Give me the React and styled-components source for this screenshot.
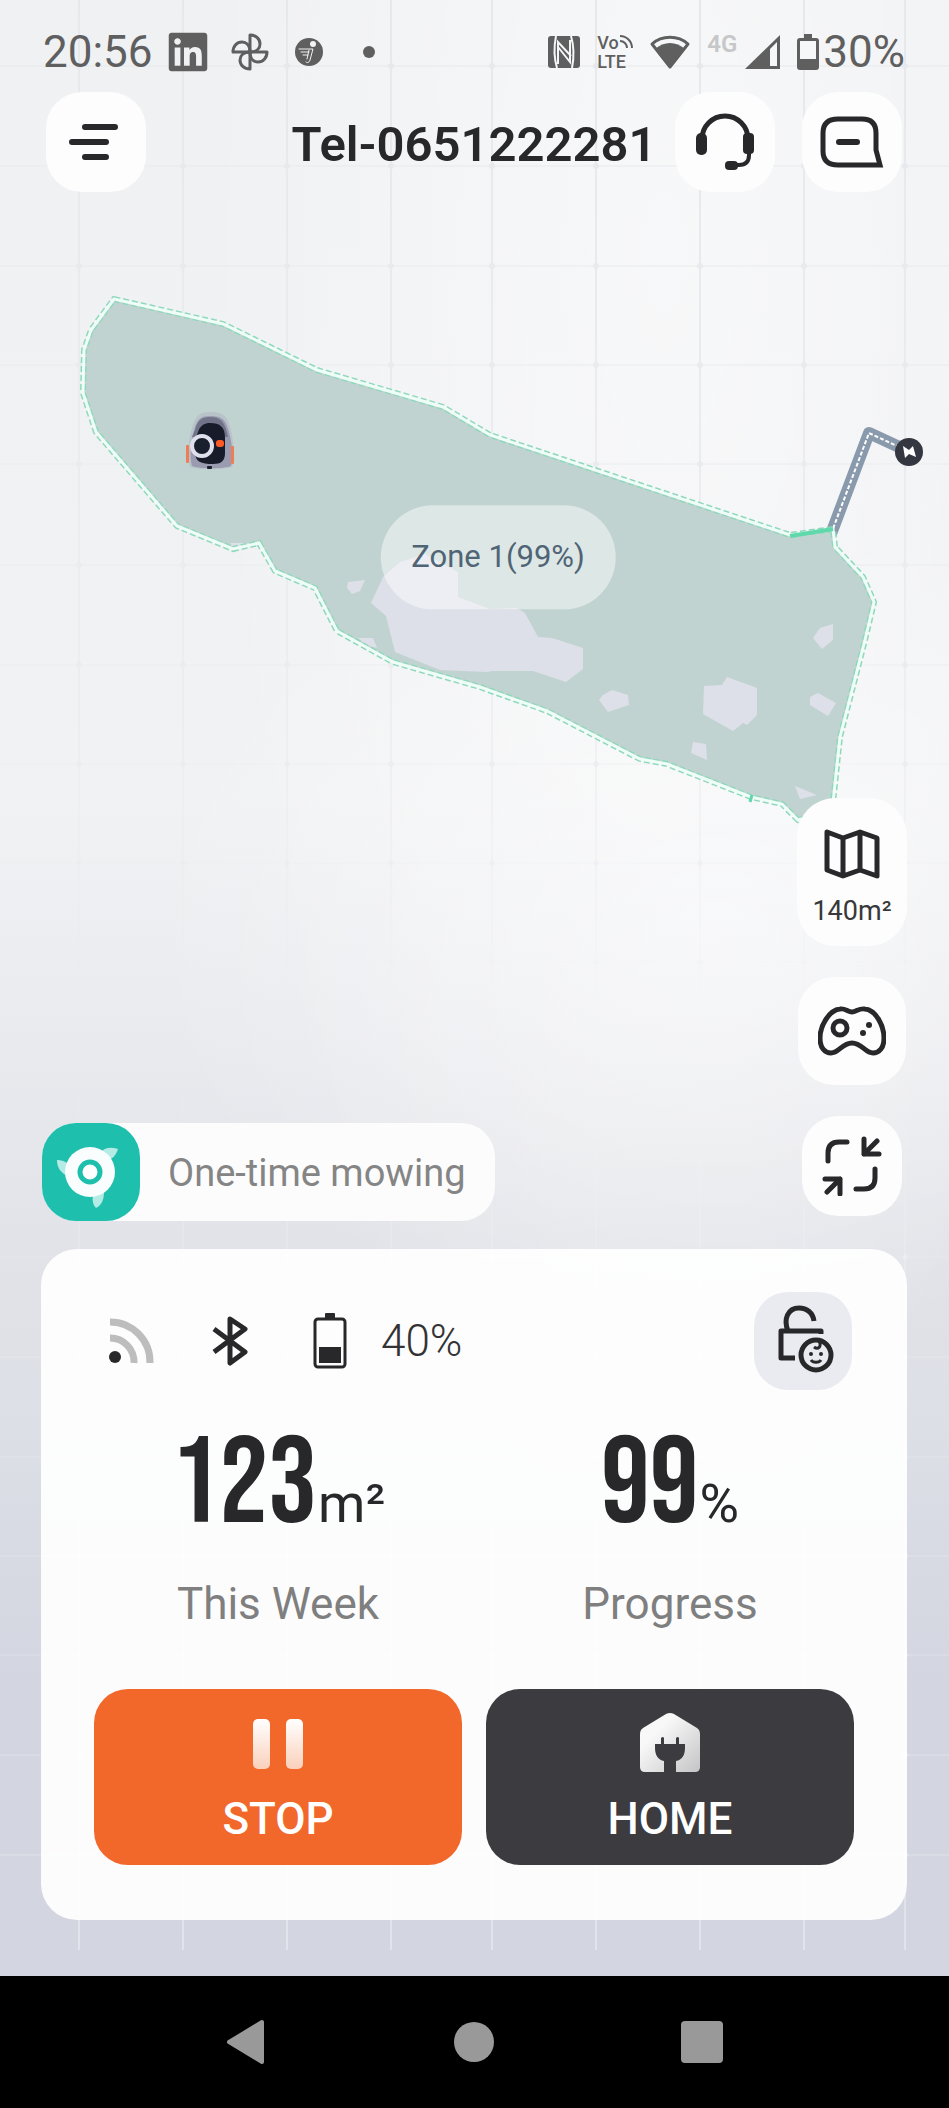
import React, { useState } from "react";
import styled, { createGlobalStyle } from "styled-components";
import { FaLinkedin } from "react-icons/fa";

const COLUMNS = [79, 183, 287, 391, 492, 596, 700, 804, 905];
const ROWS = [66, 166, 266, 365, 464, 565, 665, 764, 863, 962, 1061, 1160, 1257, 1357, 1457, 1556, 1655, 1755, 1855];

const LAWN =
    "114,299 223,324 317,370 443,407 490,435 790,535 833,529 835,547 863,577 874,602 865,640 840,737 832,812 798,820 782,804 751,797 667,764 640,759 547,711 480,687 393,662 337,631 315,588 275,571 259,543 233,549 177,526 96,432 83,393 84,350 91,330";

const UNMOWED = [
    "383,577 400,562 425,554 458,572 458,597 490,609 517,608 525,613 538,637 552,638 583,648 583,669 566,682 533,671 492,671 487,672 440,670 395,652 386,616 371,603",
    "348,582 365,580 360,591 352,594 347,588",
    "358,638 373,638 377,648 366,645",
    "230,543 254,543 234,549",
    "599,700 603,695 612,690 628,695 629,705 608,712",
    "704,686 722,685 727,677 757,688 757,715 747,725 743,723 733,731 703,714",
    "813,638 820,628 833,624 833,640 822,649",
    "810,697 818,693 836,703 828,716 810,705",
    "693,742 706,744 707,760 691,753",
    "795,786 817,795 800,799",
];

const Backdrop = () => (
    <BackdropSvg aria-hidden="true">
        <defs>
            <linearGradient id="gridFade" gradientUnits="userSpaceOnUse" x1="0" y1="0" x2="0" y2="1950">
                <stop offset="0" stopColor="#e6e8eb" />
                <stop offset="0.3" stopColor="#eaecef" stopOpacity="0.9" />
                <stop offset="0.52" stopColor="#e6e8ec" stopOpacity="0" />
                <stop offset="0.65" stopColor="#ffffff" stopOpacity="0.15" />
                <stop offset="1" stopColor="#ffffff" stopOpacity="0.35" />
            </linearGradient>
        </defs>
        <g stroke="url(#gridFade)" strokeWidth="2">
            {COLUMNS.map((x) => (
                <line key={x} x1={x} y1="0" x2={x} y2="1950" />
            ))}
        </g>
        <g stroke="url(#gridFade)" strokeWidth="1">
            {ROWS.map((y) => (
                <line key={y} x1="0" y1={y} x2="100%" y2={y} />
            ))}
        </g>
        <g fill="url(#gridFade)">
            {ROWS.map((y) => COLUMNS.map((x) => <circle key={`${x}-${y}`} cx={x} cy={y} r="3" />))}
        </g>
    </BackdropSvg>
);

const LawnMap = () => (
    <MapSvg viewBox="0 192 949 660" role="img" aria-label="Lawn map">
        <polyline points="831,534 869,433 910,452" fill="none" stroke="#8a9aad" strokeWidth="12" strokeLinejoin="round" />
        <polyline points="831,534 869,433 910,452" fill="none" stroke="#ffffff" strokeWidth="2" strokeDasharray="4 2" />
        <polygon points={LAWN} fill="#c1d3d0" />
        <g fill="#dee0e9">
            {UNMOWED.map((points) => (
                <polygon key={points} points={points} />
            ))}
        </g>
        <polygon points={LAWN} fill="none" stroke="#8fd8bd" strokeWidth="6" strokeDasharray="6 3" />
        <polygon points={LAWN} fill="none" stroke="#effdf7" strokeWidth="3" />
        <line x1="790" y1="536" x2="833" y2="529" stroke="#5fd8ab" strokeWidth="4" />
        <line x1="752" y1="795" x2="750" y2="802" stroke="#5fd8ab" strokeWidth="3" />
        <circle cx="909" cy="452" r="14" fill="#34373f" />
        <path d="M903 446l6 4 4-4 3 11-7-3-4 4z" fill="#ffffff" />
        <g>
            <path d="M190 467c-3-9-2-30 4-45 3-7 7-10 16-10s15 2 18 9c6 15 7 37 4 46-8 3-34 3-42 0z" fill="#a9aabd" opacity="0.4" />
            <path d="M192 466c-3-9-1-26 3-39 3-8 6-11 15-11s14 2 17 10c5 14 7 32 4 40-8 3-31 3-39 0z" fill="#9a9bb0" />
            <path d="M195 430c2-9 6-13 15-13s13 3 16 12l2 8h-36z" fill="#717388" />
            <path d="M195 452c1-20 4-29 15-29 10 0 15 4 15 15v15c0 8-4 11-12 11-12 0-18-2-18-12z" fill="#181b29" />
            <rect x="186" y="445" width="3" height="18" rx="1" fill="#f07c55" />
            <rect x="231" y="446" width="3" height="18" rx="1" fill="#f07c55" />
            <circle cx="202" cy="446" r="10" fill="#1a1f2d" stroke="#dfe0ec" strokeWidth="4" />
            <rect x="216" y="440" width="8" height="7" rx="3" fill="#ff5a26" />
            <rect x="207" y="466" width="5" height="3" rx="1" fill="#1c1f2b" />
        </g>
    </MapSvg>
);

const PinwheelIcon = () => (
    <svg width="38" height="38" viewBox="0 0 38 38" fill="none" stroke="#5f5f5f" strokeWidth="3" strokeLinejoin="round">
        <path d="M19 19V2c6 0 10 4 10 9 0 4-3 8-10 8z" />
        <path d="M19 19h17c0 6-4 10-9 10-4 0-8-3-8-10z" />
        <path d="M19 19v17c-6 0-10-4-10-9 0-4 3-8 10-8z" />
        <path d="M19 19H2c0-6 4-10 9-10 4 0 8 3 8 10z" />
    </svg>
);

const MowerBadgeIcon = () => (
    <svg width="38" height="38" viewBox="0 0 38 38" fill="none">
        <circle cx="19" cy="19" r="14" fill="#5f5f5f" />
        <circle cx="23" cy="11" r="3" fill="#f2f3f5" />
        <path d="M9 16h14l-3 11c-1 3-3 3-4 2M11 19h8M13 22h5M19 17l-2 9" stroke="#f2f3f5" strokeWidth="1" strokeLinecap="round" />
    </svg>
);

const NfcIcon = () => (
    <svg width="34" height="34" viewBox="0 0 34 34" fill="none">
        <rect x="1" y="1" width="32" height="32" rx="3" fill="#5f5f5f" />
        <path d="M9 1c-2 10-2 22 1 32M24 1c3 10 3 22 1 32" stroke="#f5f6f8" strokeWidth="2" />
        <path d="M11 29V7l13 14M23 5v22L11 12" stroke="#f5f6f8" strokeWidth="2" />
    </svg>
);

const WifiIcon = () => (
    <svg width="42" height="36" viewBox="0 0 42 36" fill="none">
        <path d="M21 33L3 10C13 1 29 1 39 10z" stroke="#5f5f5f" strokeWidth="3" strokeLinejoin="round" />
        <path d="M21 34L6 15c9-8 21-8 30 0z" fill="#5f5f5f" />
    </svg>
);

const SignalIcon = () => (
    <svg width="36" height="34" viewBox="0 0 36 34">
        <path d="M0 34L35 0v34z" fill="#5f5f5f" />
        <path d="M25 14l7-7v24h-7z" fill="#f6f7f9" />
    </svg>
);

const PhoneBatteryIcon = () => (
    <svg width="22" height="36" viewBox="0 0 22 36">
        <path d="M7 0h8v4h4q3 0 3 3v26q0 3-3 3H3q-3 0-3-3V7q0-3 3-3h4z" fill="#5f5f5f" />
        <rect x="3" y="7" width="16" height="18" fill="#f6f7f9" />
    </svg>
);

const MenuIcon = () => (
    <svg width="54" height="38" viewBox="0 0 54 38" fill="none" stroke="#28282b" strokeWidth="6" strokeLinecap="round">
        <path d="M16 4h30M3 19h34M16 34h21" />
    </svg>
);

const HeadsetIcon = () => (
    <svg width="58" height="58" viewBox="0 0 58 58" fill="none" stroke="#28282b">
        <path d="M6 26a23 23 0 0 1 46 0" strokeWidth="5" />
        <path d="M53 38v4c0 7-4 10-10 10h-6" strokeWidth="4" />
        <g fill="#28282b" stroke="none">
            <rect x="0" y="20" width="11" height="22" rx="5" />
            <rect x="47" y="20" width="11" height="21" rx="4" />
            <rect x="29" y="48" width="13" height="9" rx="4" />
        </g>
    </svg>
);

const ChatIcon = () => (
    <svg width="64" height="52" viewBox="0 0 64 52" fill="none" stroke="#28282b" strokeWidth="5">
        <path d="M18 3h24q14 0 14 14v17l4 15H18Q3 49 3 35V17Q3 3 18 3z" />
        <path d="M19 26h18" strokeWidth="6" strokeLinecap="round" />
    </svg>
);

const FoldedMapIcon = () => (
    <svg width="56" height="50" viewBox="0 0 56 50" fill="none" stroke="#28282b" strokeWidth="5" strokeLinejoin="round">
        <path d="M3 3l16 6 17-6 17 6v38l-17-6-17 6-16-6zM19 9v38M36 3v38" />
    </svg>
);

const GamepadIcon = () => (
    <svg width="68" height="50" viewBox="0 0 68 50" fill="none" stroke="#28282b" strokeWidth="5">
        <path d="M22 3c5-1 8 3 12 3s7-4 13-3c11 1 19 17 19 29 0 10-5 15-11 15-8 0-11-10-21-10S21 47 13 47C7 47 2 42 2 32 2 20 11 4 22 3z" />
        <circle cx="22" cy="22" r="7" />
        <g fill="#28282b" stroke="none">
            <circle cx="45" cy="27" r="3" />
            <circle cx="51" cy="19" r="3" />
        </g>
    </svg>
);

const CollapseIcon = () => (
    <svg width="60" height="60" viewBox="0 0 60 60" fill="none" stroke="#28282b" strokeWidth="5" strokeLinecap="round" strokeLinejoin="round">
        <path d="M6 25v-8Q6 6 17 6h8M42 3v15h15M55 5L42 18M3 43h15v15M5 56l13-13M53 33v9q0 11-11 11h-8" />
    </svg>
);

const BladeIcon = () => (
    <svg width="98" height="98" viewBox="0 0 98 98">
        <g fill="#b4ebe4">
            <path d="M60 28c4-4 10-4 16-2-2 6-5 10-11 11z" />
            <path d="M15 37c5 0 10 2 13 6l-3 10c-7-4-10-9-10-16z" />
            <path d="M51 72l11-3c0 7-2 13-8 16-3-3-4-8-3-13z" />
        </g>
        <circle cx="48" cy="49" r="25" fill="#fafdfd" />
        <circle cx="48" cy="49" r="10" fill="#ffffff" stroke="#1fbfad" strokeWidth="5" />
    </svg>
);

const RobotSignalIcon = () => (
    <svg width="46" height="46" viewBox="0 0 46 46" fill="none" stroke="#bdbdbd" strokeWidth="7">
        <path d="M1 20a24 24 0 0 1 24 25M1 4a40 40 0 0 1 40 41" />
        <circle cx="6" cy="39" r="6" fill="#28282b" stroke="none" />
    </svg>
);

const BluetoothIcon = () => (
    <svg width="44" height="52" viewBox="0 0 44 52" fill="none" stroke="#28282b" strokeWidth="5" strokeLinejoin="round">
        <path d="M2 14l31 23-15 11V4l15 10L2 37" />
    </svg>
);

const RobotBatteryIcon = () => (
    <svg width="34" height="56" viewBox="0 0 34 56">
        <rect x="2" y="6" width="30" height="48" rx="3" fill="none" stroke="#28282b" strokeWidth="3" />
        <rect x="12" y="0" width="10" height="6" rx="1" fill="#28282b" />
        <rect x="6" y="34" width="22" height="16" fill="#28282b" />
    </svg>
);

const ChildLockIcon = () => (
    <svg width="98" height="98" viewBox="0 0 98 98" fill="none" stroke="#28282b" strokeWidth="5">
        <path d="M34 39c-5-12 0-23 11-23 8 0 14 5 15 13M67 42v-3H27v27h14" strokeLinejoin="round" />
        <circle cx="62" cy="63" r="15" strokeWidth="5" />
        <path d="M57 68c2 3 8 3 10 0M65 49c3 6-1 9-5 6" strokeWidth="3" />
        <circle cx="57" cy="62" r="2" fill="#28282b" stroke="none" />
        <circle cx="67" cy="62" r="2" fill="#28282b" stroke="none" />
    </svg>
);

const PauseIcon = () => (
    <svg width="62" height="60" viewBox="0 0 62 60">
        <defs>
            <linearGradient id="pauseFill" x1="0" y1="0" x2="0" y2="1">
                <stop offset="0" stopColor="#ffffff" />
                <stop offset="1" stopColor="#fad0bb" />
            </linearGradient>
        </defs>
        <rect x="6" y="6" width="17" height="50" rx="5" fill="url(#pauseFill)" />
        <rect x="39" y="6" width="17" height="50" rx="5" fill="url(#pauseFill)" />
    </svg>
);

const HomeIcon = () => (
    <svg width="62" height="60" viewBox="0 0 62 60">
        <defs>
            <linearGradient id="homeFill" x1="0" y1="0" x2="1" y2="1">
                <stop offset="0.3" stopColor="#f8f8f8" />
                <stop offset="1" stopColor="#c4c4c6" />
            </linearGradient>
        </defs>
        <path d="M27 1q4-2 8 0l23 14q3 2 3 6v33q0 5-5 5H6q-5 0-5-5V21q0-4 3-6z" fill="url(#homeFill)" />
        <path d="M22 25q2-2 3 0v6h12v-6q2-2 3 0v6h6v4c0 7-3 12-9 13v12H25V48c-6-1-9-6-9-13v-4h6z" fill="#3c3b40" />
    </svg>
);

const Stat = ({ value, unit, label }) => (
    <StatBox>
        <StatValue>
            {value}
            <StatUnit>{unit}</StatUnit>
        </StatValue>
        <StatLabel>{label}</StatLabel>
    </StatBox>
);

const App = () => {
    const [running, setRunning] = useState(true);

    return (
        <Screen>
            <GlobalStyle />
            <Backdrop />
            <StatusBar>
                <StatusLeft>
                    <Clock>20:56</Clock>
                    <StatusIcons>
                        <FaLinkedin size={44} color="#5f5f5f" />
                        <PinwheelIcon />
                        <MowerBadgeIcon />
                        <MoreDot />
                    </StatusIcons>
                </StatusLeft>
                <StatusRight>
                    <NfcIcon />
                    <VoLte>
                        <span>Vo</span>
                        <span>LTE</span>
                        <VoLteWaves viewBox="0 0 14 14" fill="none" stroke="#5f5f5f" strokeWidth="2">
                            <path d="M1 1a12 12 0 0 1 12 12M1 6a7 7 0 0 1 7 7" />
                        </VoLteWaves>
                    </VoLte>
                    <WifiIcon />
                    <Network>
                        <NetworkLabel>4G</NetworkLabel>
                        <SignalIcon />
                    </Network>
                    <PhoneBattery>
                        <PhoneBatteryIcon />
                        30%
                    </PhoneBattery>
                </StatusRight>
            </StatusBar>

            <Header>
                <HeaderSide>
                    <IconButton type="button" aria-label="Menu">
                        <MenuIcon />
                    </IconButton>
                </HeaderSide>
                <Title>Tel-0651222281</Title>
                <HeaderSide $end>
                    <IconButton type="button" aria-label="Support">
                        <HeadsetIcon />
                    </IconButton>
                    <IconButton type="button" aria-label="Messages">
                        <ChatIcon />
                    </IconButton>
                </HeaderSide>
            </Header>

            <Stage>
                <MapCanvas>
                    <LawnMap />
                    <ZoneLabel>Zone 1(99%)</ZoneLabel>
                </MapCanvas>
                <StageControls>
                    <TaskPill>
                        <TaskIcon>
                            <BladeIcon />
                        </TaskIcon>
                        <TaskName>One-time mowing</TaskName>
                    </TaskPill>
                    <SideControls>
                        <AreaButton type="button">
                            <FoldedMapIcon />
                            140m²
                        </AreaButton>
                        <IconButton type="button" $size={108} aria-label="Remote control">
                            <GamepadIcon />
                        </IconButton>
                        <IconButton type="button" aria-label="Collapse map">
                            <CollapseIcon />
                        </IconButton>
                    </SideControls>
                </StageControls>
            </Stage>

            <Card>
                <DeviceRow>
                    <DeviceStatus>
                        <RobotSignalIcon />
                        <BluetoothIcon />
                        <Charge>
                            <RobotBatteryIcon />
                            40%
                        </Charge>
                    </DeviceStatus>
                    <LockButton type="button" aria-label="Child lock">
                        <ChildLockIcon />
                    </LockButton>
                </DeviceRow>
                <TwoColumns>
                    <Stat value="123" unit="m²" label="This Week" />
                    <Stat value="99" unit="%" label="Progress" />
                </TwoColumns>
                <TwoColumns>
                    <ActionButton type="button" $color="#f2672a" onClick={() => setRunning(!running)}>
                        <PauseIcon />
                        {running ? "STOP" : "START"}
                    </ActionButton>
                    <ActionButton type="button" $color="#3c3b40">
                        <HomeIcon />
                        HOME
                    </ActionButton>
                </TwoColumns>
            </Card>

            <NavBar>
                <NavButton type="button" aria-label="Back">
                    <svg width="44" height="48" viewBox="0 0 44 48">
                        <path d="M38 4v40L5 24z" fill="#999999" stroke="#999999" strokeWidth="4" strokeLinejoin="round" />
                    </svg>
                </NavButton>
                <NavButton type="button" aria-label="Home screen">
                    <svg width="40" height="40" viewBox="0 0 40 40">
                        <circle cx="20" cy="20" r="20" fill="#999999" />
                    </svg>
                </NavButton>
                <NavButton type="button" aria-label="Recent apps">
                    <svg width="42" height="42" viewBox="0 0 42 42">
                        <rect width="42" height="42" rx="4" fill="#999999" />
                    </svg>
                </NavButton>
            </NavBar>
        </Screen>
    );
};

export default App;

const GlobalStyle = createGlobalStyle`
    * {
        box-sizing: border-box;
    }

    body {
        margin: 0;
        font-family: Roboto, "Liberation Sans", sans-serif;
        color: #28282b;
    }

    button {
        font: inherit;
        color: inherit;
        padding: 0;
        border: none;
        cursor: pointer;
    }

    svg {
        display: block;
        flex-shrink: 0;
    }
`;

const Screen = styled.div`
    position: relative;
    isolation: isolate;
    display: flex;
    flex-direction: column;
    min-height: 100vh;
    background:
        radial-gradient(ellipse at 70% 12%, rgba(255, 255, 255, 0.5), rgba(255, 255, 255, 0) 50%),
        radial-gradient(ellipse 60% 20% at 75% 44%, rgba(255, 255, 255, 0.5), rgba(255, 255, 255, 0)),
        linear-gradient(180deg, #f0f1f3 0%, #f1f2f4 38%, #e9eaee 50%, #e2e3e8 59%, #dcdfe6 68%, #d3d5e0 80%, #d3d5e0 100%);
`;

const BackdropSvg = styled.svg`
    position: absolute;
    inset: 0;
    z-index: -1;
    width: 100%;
    height: 100%;
`;

const StatusBar = styled.div`
    display: flex;
    align-items: center;
    justify-content: space-between;
    height: 92px;
    padding: 12px 44px 0 43px;
    font-size: 44px;
    line-height: 52px;
    color: #5f5f5f;
`;

const StatusLeft = styled.div`
    display: flex;
    align-items: center;
    gap: 13px;
`;

const Clock = styled.time`
    font-weight: 400;
`;

const StatusIcons = styled.div`
    display: flex;
    align-items: center;
    gap: 21px;
`;

const MoreDot = styled.span`
    width: 12px;
    height: 12px;
    margin: 0 14px;
    border-radius: 50%;
    background-color: #5f5f5f;
`;

const StatusRight = styled.div`
    display: flex;
    align-items: center;
    gap: 16px;
`;

const VoLte = styled.div`
    position: relative;
    display: flex;
    flex-direction: column;
    width: 36px;
    font-size: 18px;
    font-weight: 500;
    line-height: 19px;
`;

const VoLteWaves = styled.svg`
    position: absolute;
    top: 2px;
    right: 0;
    width: 14px;
    height: 14px;
`;

const Network = styled.div`
    display: flex;
    align-items: flex-start;
    gap: 8px;
`;

const NetworkLabel = styled.span`
    font-size: 24px;
    font-weight: 600;
    line-height: 18px;
    color: #c6c7c9;
`;

const PhoneBattery = styled.div`
    display: flex;
    align-items: center;
    gap: 4px;
`;

const Header = styled.header`
    display: flex;
    align-items: center;
    padding: 0 47px 0 46px;
`;

const HeaderSide = styled.div`
    display: flex;
    flex: 1;
    gap: 27px;
    justify-content: ${({ $end }) => ($end ? "flex-end" : "flex-start")};
`;

const Title = styled.h1`
    margin: 0;
    padding-top: 6px;
    font-size: 49px;
    font-weight: 600;
    line-height: 60px;
    white-space: nowrap;
`;

const IconButton = styled.button`
    display: flex;
    align-items: center;
    justify-content: center;
    width: ${({ $size }) => $size || 100}px;
    height: ${({ $size }) => $size || 100}px;
    border-radius: 36px;
    background-color: #fdfdfe;
`;

const Stage = styled.main`
    display: grid;
    flex: 1;
`;

const MapCanvas = styled.div`
    position: relative;
    grid-area: 1 / 1;
    align-self: start;
`;

const MapSvg = styled.svg`
    width: 100%;
    height: auto;
`;

const ZoneLabel = styled.span`
    position: absolute;
    top: 50%;
    left: 50%;
    transform: translate(-40%, -16%);
    padding: 34px 31px;
    border-radius: 52px;
    background-color: rgba(255, 255, 255, 0.45);
    font-size: 31px;
    line-height: 36px;
    color: #4f6475;
    white-space: nowrap;
`;

const StageControls = styled.div`
    position: relative;
    grid-area: 1 / 1;
    display: flex;
    align-items: flex-end;
    justify-content: space-between;
    padding: 0 42px 28px;
`;

const TaskPill = styled.div`
    display: flex;
    align-items: center;
    padding-right: 30px;
    border-radius: 34px;
    background-color: #fcfcfd;
`;

const TaskIcon = styled.div`
    border-radius: 34px;
    background-color: #1fbfad;
`;

const TaskName = styled.span`
    padding: 2px 0 0 28px;
    font-size: 38px;
    line-height: 52px;
    color: #858585;
`;

const SideControls = styled.div`
    display: flex;
    flex-direction: column;
    align-items: center;
    gap: 31px;
    padding-bottom: 5px;
`;

const AreaButton = styled.button`
    display: flex;
    flex-direction: column;
    align-items: center;
    gap: 16px;
    width: 110px;
    padding: 31px 0 18px;
    border-radius: 38px;
    background-color: #fdfdfe;
    font-size: 27px;
    line-height: 33px;
    color: #38383b;
`;

const Card = styled.section`
    display: flex;
    flex-direction: column;
    margin: 0 42px 56px 41px;
    padding: 43px 53px 55px;
    border-radius: 36px;
    background-color: rgba(255, 255, 255, 0.92);
`;

const DeviceRow = styled.div`
    display: flex;
    align-items: center;
    justify-content: space-between;
    padding: 0 2px 0 15px;
`;

const DeviceStatus = styled.div`
    display: flex;
    align-items: center;
    gap: 57px;
`;

const Charge = styled.div`
    display: flex;
    align-items: center;
    gap: 34px;
    font-size: 44px;
    font-weight: 300;
    line-height: 52px;
    color: #333335;
`;

const LockButton = styled.button`
    border-radius: 34px;
    background-color: #e9ebf0;
`;

const TwoColumns = styled.div`
    display: grid;
    grid-template-columns: 1fr 1fr;
    gap: 24px;
`;

const StatBox = styled.div`
    display: flex;
    flex-direction: column;
    align-items: center;
    padding: 36px 0 59px;
`;

const StatValue = styled.div`
    display: flex;
    align-items: baseline;
    gap: 1px;
    margin-bottom: 32px;
    font-family: "Bebas Neue", "Roboto Condensed", "Liberation Sans Narrow", Roboto, sans-serif;
    font-size: 122px;
    font-weight: 400;
    line-height: 120px;
`;

const StatUnit = styled.span`
    font-family: Roboto, "Liberation Sans", sans-serif;
    font-size: 54px;
    font-weight: 400;
    line-height: 60px;
`;

const StatLabel = styled.span`
    font-size: 44px;
    line-height: 52px;
    color: #7f7f7f;
`;

const ActionButton = styled.button`
    display: flex;
    flex-direction: column;
    align-items: center;
    gap: 20px;
    height: 176px;
    padding-top: 24px;
    border-radius: 34px;
    background-color: ${({ $color }) => $color};
    color: #ffffff;
    font-size: 44px;
    font-weight: 500;
    line-height: 52px;
`;

const NavBar = styled.nav`
    display: grid;
    grid-template-columns: repeat(3, 228px);
    justify-content: center;
    height: 132px;
    padding-right: 2px;
    background-color: #000000;
`;

const NavButton = styled.button`
    display: flex;
    align-items: center;
    justify-content: center;
    background-color: transparent;
`;
